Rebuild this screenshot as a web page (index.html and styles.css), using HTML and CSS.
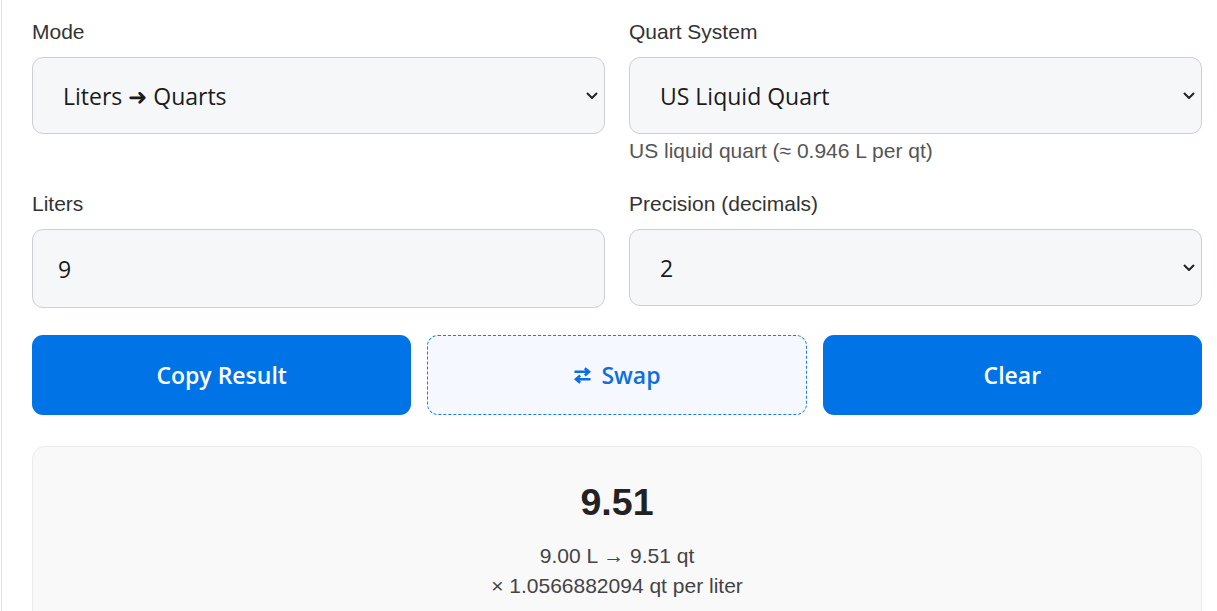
FILE: index.html
```html
<!DOCTYPE html>
<html lang="en">
<head>
<meta charset="utf-8">
<title>Liters to Quarts Converter</title>
<link rel="stylesheet" href="styles.css">
</head>
<body>
<div class="card">
  <div class="fields">
    <div class="field">
      <label class="label" for="mode">Mode</label>
      <div class="select-wrap">
        <select id="mode" class="control select">
          <option>Liters ➜ Quarts</option>
          <option>Quarts ➜ Liters</option>
        </select>
        <svg class="chev" viewBox="0 0 12 7" aria-hidden="true"><path d="M1 1l5 5 5-5"/></svg>
      </div>
    </div>
    <div class="field">
      <label class="label" for="system">Quart System</label>
      <div class="select-wrap">
        <select id="system" class="control select">
          <option>US Liquid Quart</option>
          <option>US Dry Quart</option>
          <option>Imperial Quart</option>
        </select>
        <svg class="chev" viewBox="0 0 12 7" aria-hidden="true"><path d="M1 1l5 5 5-5"/></svg>
      </div>
      <div class="hint">US liquid quart (≈ 0.946 L per qt)</div>
    </div>
    <div class="field">
      <label class="label" for="liters">Liters</label>
      <input id="liters" class="control input" type="text" value="9">
    </div>
    <div class="field">
      <label class="label" for="precision">Precision (decimals)</label>
      <div class="select-wrap">
        <select id="precision" class="control select select-short">
          <option>2</option>
          <option>3</option>
          <option>4</option>
        </select>
        <svg class="chev" viewBox="0 0 12 7" aria-hidden="true"><path d="M1 1l5 5 5-5"/></svg>
      </div>
    </div>
  </div>

  <div class="actions">
    <button class="btn btn-primary" type="button">Copy Result</button>
    <button class="btn btn-outline" type="button">
      <svg class="swap-icon" viewBox="0 0 19 17" aria-hidden="true"><path d="M1.5 4.8h14.5M11.8 1.2l4.2 3.6-4.2 3.6M17.5 12.2H3M7.2 8.6L3 12.2l4.2 3.6"/></svg>
      <span>Swap</span>
    </button>
    <button class="btn btn-primary" type="button">Clear</button>
  </div>

  <div class="result">
    <div class="result-value">9.51</div>
    <div class="result-line">9.00 L → 9.51 qt</div>
    <div class="result-line">× 1.0566882094 qt per liter</div>
  </div>
</div>
</body>
</html>
```

FILE: styles.css
```css
html, body {
  margin: 0;
  padding: 0;
  background: #ffffff;
  overflow: hidden;
}

body {
  font-family: "Liberation Sans", Arial, sans-serif;
  color: #333333;
}

.card {
  margin-left: 1px;
  width: 1200px;
  padding: 20px 30px 40px 30px;
  border-left: 1px solid #e2e2e2;
}

.fields {
  display: grid;
  grid-template-columns: 573px 573px;
  column-gap: 24px;
  row-gap: 29px;
}

.field {
  display: flex;
  flex-direction: column;
}

.label {
  display: block;
  font-size: 21px;
  line-height: 24px;
  color: #333333;
  margin-bottom: 13px;
}

.select-wrap {
  position: relative;
}

.control {
  box-sizing: border-box;
  width: 100%;
  margin: 0;
  background: #f6f7f9;
  border: 1px solid #cfcfd3;
  border-radius: 11px;
  color: #1b1b1b;
  font-family: "Open Sans", "Noto Sans", sans-serif;
  font-size: 23px;
  outline: none;
}

.select {
  -webkit-appearance: none;
  appearance: none;
  height: 77px;
  padding: 0 40px 0 30px;
}

.select-short {
  height: 77px;
}

.input {
  height: 79px;
  padding: 0 25px;
}

.chev {
  position: absolute;
  right: 7px;
  top: 50%;
  width: 12px;
  height: 7px;
  margin-top: -4px;
  fill: none;
  stroke: #222222;
  stroke-width: 2;
  pointer-events: none;
}

.hint {
  font-size: 21px;
  line-height: 24px;
  color: #555555;
  margin-top: 5px;
}

.actions {
  display: grid;
  grid-template-columns: 1fr 1fr 1fr;
  column-gap: 16px;
  margin-top: 27px;
  width: 1170px;
}

.btn {
  box-sizing: border-box;
  height: 80px;
  border-radius: 11px;
  font-family: "Open Sans", "Noto Sans", sans-serif;
  font-size: 23px;
  font-weight: 600;
  display: flex;
  align-items: center;
  justify-content: center;
  gap: 9px;
  cursor: pointer;
}

.btn-primary {
  background: #0074e6;
  border: none;
  color: #ffffff;
}

.btn-outline {
  background: #f5f9ff;
  border: 1px dashed #1a7de8;
  color: #0b6fe0;
}

.swap-icon {
  width: 19px;
  height: 17px;
  fill: none;
  stroke: currentColor;
  stroke-width: 2.6;
}

.result {
  margin-top: 31px;
  width: 1170px;
  box-sizing: border-box;
  background: #f9f9f9;
  border: 1px solid #ececec;
  border-radius: 13px;
  padding: 33px 20px 40px;
  text-align: center;
}

.result-value {
  font-size: 37.5px;
  line-height: 45px;
  font-weight: 700;
  color: #222222;
  margin-bottom: 16px;
}

.result-line {
  font-size: 21px;
  line-height: 30px;
  color: #444444;
}
```
